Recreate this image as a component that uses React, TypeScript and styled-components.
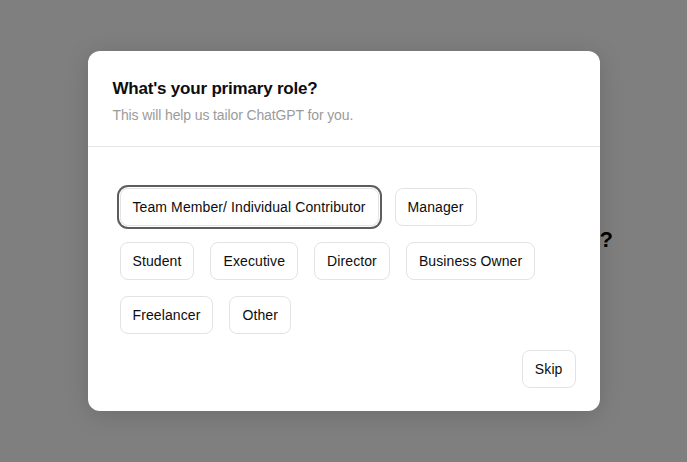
import styled, { createGlobalStyle } from 'styled-components'

const GlobalStyle = createGlobalStyle`
  html, body {
    margin: 0;
    padding: 0;
    background: #ffffff;
    font-family: "Liberation Sans", Arial, sans-serif;
  }
`

const roles = [
  'Team Member/ Individual Contributor',
  'Manager',
  'Student',
  'Executive',
  'Director',
  'Business Owner',
  'Freelancer',
  'Other',
]

const App = () => {
  return (
    <Page>
      <GlobalStyle />
      <BackHeading>What's your primary role?</BackHeading>
      <Overlay>
        <Modal>
          <Header>
            <Title>What's your primary role?</Title>
            <Subtitle>This will help us tailor ChatGPT for you.</Subtitle>
          </Header>
          <Body>
            <Chips>
              {roles.map((r, i) => (
                <Chip key={r} focused={i === 0}>{r}</Chip>
              ))}
            </Chips>
            <Footer>
              <Chip>Skip</Chip>
            </Footer>
          </Body>
        </Modal>
      </Overlay>
    </Page>
  )
}

export default App

const Page = styled.div`
position: relative;
width: 687px;
height: 462px;
overflow: hidden;
`

const BackHeading = styled.h1`
margin: 0;
width: 613px;
padding-top: 227px;
text-align: right;
font-size: 22px;
line-height: 26px;
font-weight: 700;
color: #000;
white-space: nowrap;
`

const Overlay = styled.div`
position: absolute;
inset: 0;
background: rgba(0, 0, 0, 0.5);
display: flex;
align-items: center;
justify-content: center;
`

const Modal = styled.div`
width: 512px;
height: 360px;
background: #fff;
border-radius: 12px;
display: flex;
flex-direction: column;
box-shadow: 0 4px 24px rgba(0, 0, 0, 0.15);
`

const Header = styled.div`
height: 96px;
box-sizing: border-box;
padding: 27px 24px 0 25px;
border-bottom: 1px solid #e5e5e5;
`

const Title = styled.h2`
margin: 0;
font-size: 17px;
font-weight: 700;
letter-spacing: -0.2px;
color: #0d0d0d;
line-height: 22px;
`

const Subtitle = styled.p`
margin: 6px 0 0;
font-size: 14px;
letter-spacing: -0.12px;
color: #9b9b9b;
line-height: 18px;
`

const Body = styled.div`
flex: 1;
padding: 41px 24px 23px 32px;
display: flex;
flex-direction: column;
`

const Chips = styled.div`
display: flex;
flex-wrap: wrap;
gap: 16px;
padding-right: 30px;
`

const Footer = styled.div`
margin-top: auto;
display: flex;
justify-content: flex-end;
`

const Chip = styled.button<{ focused?: boolean }>`
height: 38px;
box-sizing: border-box;
padding: 0 12px;
border: 1px solid #e3e3e3;
border-radius: 8px;
background: #fff;
font-family: "Liberation Sans", Arial, sans-serif;
font-size: 14px;
letter-spacing: 0.1px;
color: #0d0d0d;
cursor: pointer;
box-shadow: ${p => (p.focused ? '0 0 0 1px #fff, 0 0 0 3px #5d5d5d' : 'none')};
`
